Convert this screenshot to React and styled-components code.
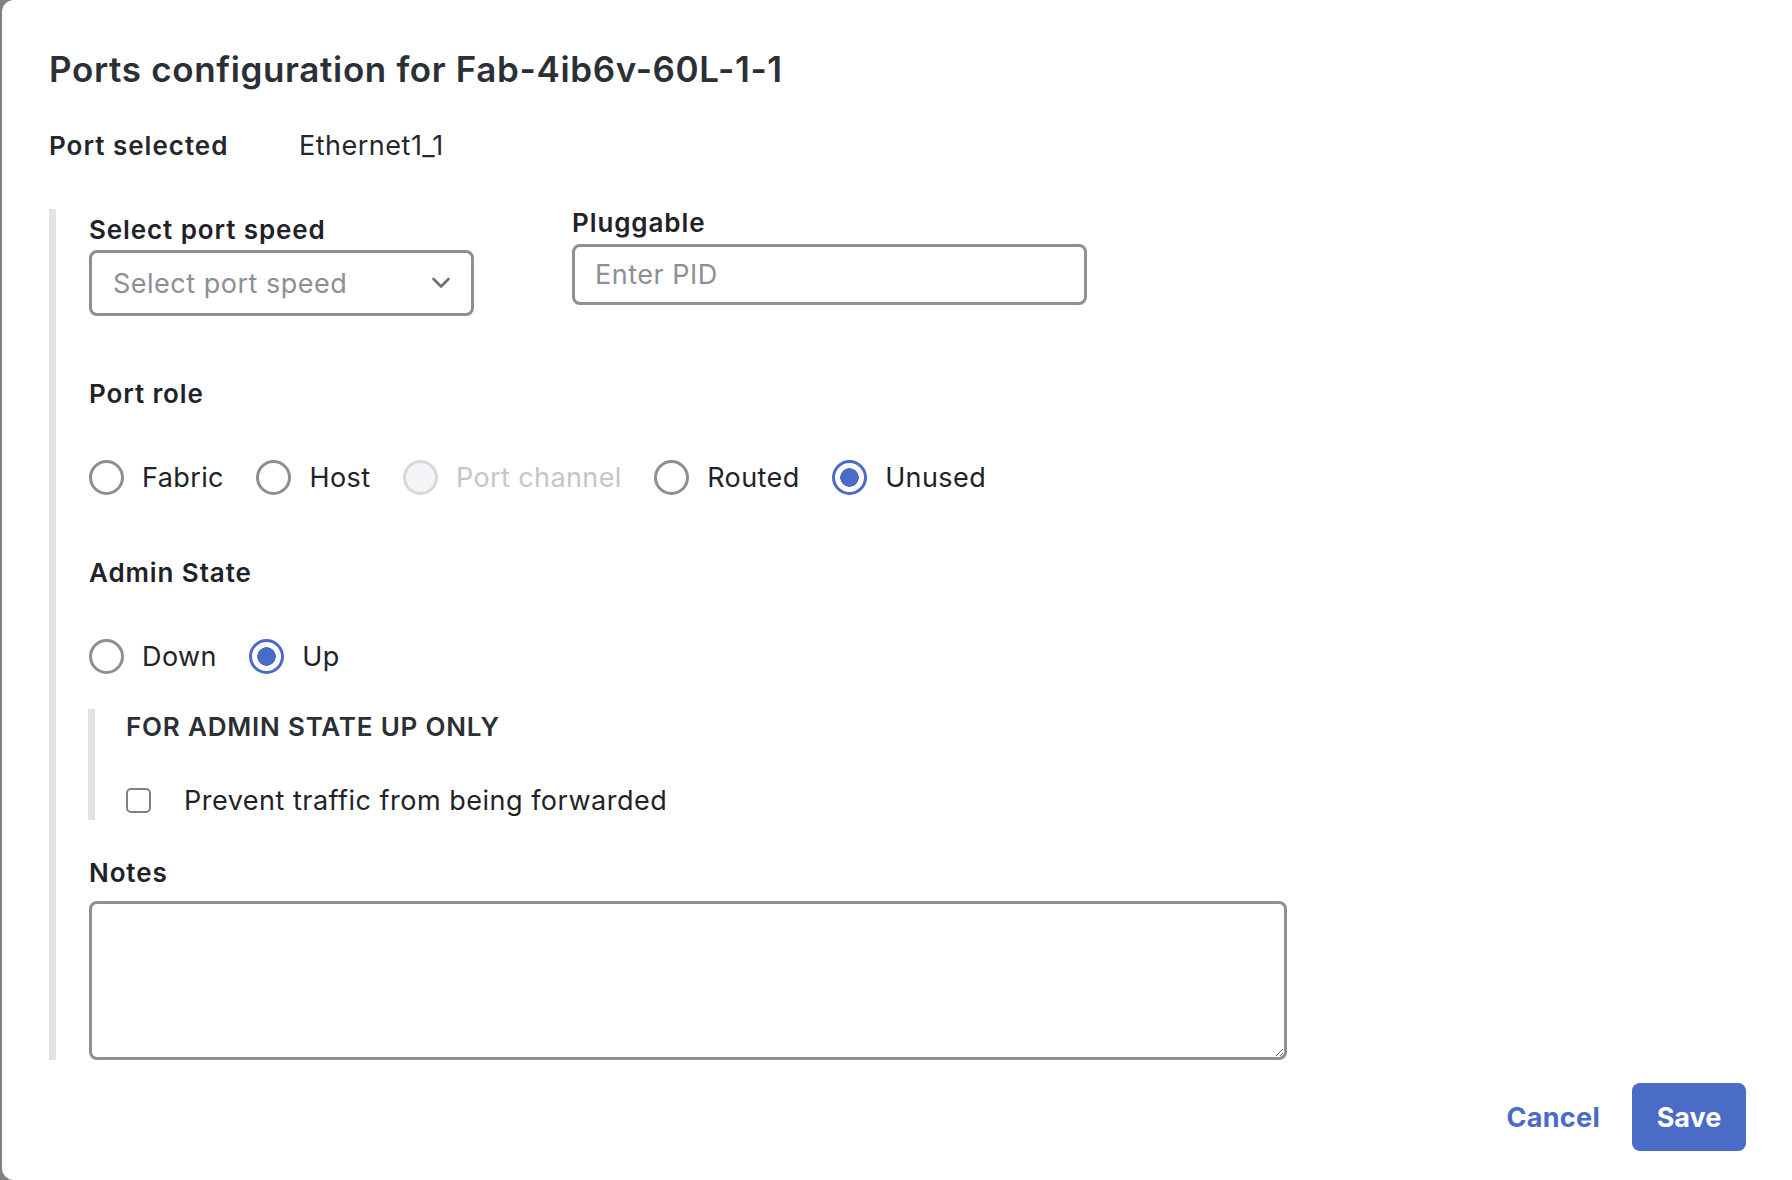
import styled, { createGlobalStyle } from "styled-components";

const GlobalStyle = createGlobalStyle`
  html, body {
    margin: 0;
    padding: 0;
  }
  body {
    background: #7f8185;
    font-family: Inter, "Noto Sans", sans-serif;
    color: #1f2329;
  }
`;

const roles = [
  { label: "Fabric" },
  { label: "Host" },
  { label: "Port channel", disabled: true },
  { label: "Routed" },
  { label: "Unused", checked: true },
];

const states = [{ label: "Down" }, { label: "Up", checked: true }];

function RadioGroup({ items }) {
  return (
    <RadioRow>
      {items.map((item) => (
        <RadioItem key={item.label} $disabled={item.disabled}>
          <RadioCircle $checked={item.checked} $disabled={item.disabled} />
          {item.label}
        </RadioItem>
      ))}
    </RadioRow>
  );
}

function Chevron() {
  return (
    <svg width="20" height="12" viewBox="0 0 20 12" fill="none">
      <polyline
        points="2.5,2 10,9.5 17.5,2"
        stroke="#6d7178"
        strokeWidth="2.6"
        strokeLinecap="round"
        strokeLinejoin="round"
      />
    </svg>
  );
}

export default function App() {
  return (
    <Page>
      <GlobalStyle />
      <Dialog>
        <Title>Ports configuration for Fab-4ib6v-60L-1-1</Title>
        <SelectedRow>
          <SelectedKey>Port selected</SelectedKey>
          <span>Ethernet1_1</span>
        </SelectedRow>

        <Section>
          <FieldRow>
            <Field $offset={7}>
              <Label>Select port speed</Label>
              <SelectBox>
                Select port speed
                <Chevron />
              </SelectBox>
            </Field>
            <Field>
              <Label>Pluggable</Label>
              <PidInput placeholder="Enter PID" />
            </Field>
          </FieldRow>

          <GroupLabel>Port role</GroupLabel>
          <RadioGroup items={roles} />

          <GroupLabel>Admin State</GroupLabel>
          <RadioGroup items={states} />

          <SubSection>
            <SubHeading>For admin state up only</SubHeading>
            <CheckRow>
              <CheckBox />
              Prevent traffic from being forwarded
            </CheckRow>
          </SubSection>

          <NotesLabel>Notes</NotesLabel>
          <Notes />
        </Section>

        <Footer>
          <CancelButton>Cancel</CancelButton>
          <SaveButton>Save</SaveButton>
        </Footer>
      </Dialog>
    </Page>
  );
}

const Page = styled.div`
  display: flex;
  height: 1180px;
  padding-left: 2px;
  overflow: hidden;
`;

const Dialog = styled.div`
  flex: 1;
  display: flex;
  flex-direction: column;
  background: #ffffff;
  border-radius: 12px 0 0 12px;
  padding: 49px 46px 0 47px;
`;

const Title = styled.h1`
  margin: 0;
  font-size: 35px;
  font-weight: 600;
  line-height: 40px;
  color: #2b2f36;
  letter-spacing: 0.65px;
`;

const SelectedRow = styled.div`
  display: flex;
  margin-top: 41px;
  font-size: 27px;
  line-height: 32px;
  letter-spacing: 0.5px;
  color: #23272e;
`;

const SelectedKey = styled.span`
  width: 250px;
  font-size: 26px;
  font-weight: 600;
  letter-spacing: 1px;
`;

const Section = styled.div`
  display: flex;
  flex-direction: column;
  align-items: flex-start;
  margin-top: 47px;
  padding-left: 33px;
  border-left: 7px solid #e1e3e7;
`;

const FieldRow = styled.div`
  display: flex;
  align-items: flex-start;
  gap: 98px;
`;

const Field = styled.div`
  display: flex;
  flex-direction: column;
  margin-top: ${(p) => p.$offset || 0}px;
`;

const Label = styled.div`
  font-size: 26px;
  font-weight: 600;
  line-height: 28px;
  letter-spacing: 0.9px;
  margin-bottom: 7px;
  color: #1f2329;
`;

const SelectBox = styled.div`
  box-sizing: border-box;
  width: 385px;
  height: 66px;
  margin-top: -1px;
  display: flex;
  align-items: center;
  justify-content: space-between;
  padding: 0 20px 0 21px;
  border: 3px solid #8b8f96;
  border-radius: 8px;
  font-size: 27px;
  letter-spacing: 0.5px;
  color: #8b8f96;
`;

const PidInput = styled.input`
  box-sizing: border-box;
  width: 515px;
  height: 61px;
  padding: 0 20px;
  border: 3px solid #8b8f96;
  border-radius: 8px;
  font-family: inherit;
  font-size: 27px;
  letter-spacing: 0.5px;
  outline: none;

  &::placeholder {
    color: #8b8f96;
  }
`;

const GroupLabel = styled(Label)`
  margin: 64px 0 0;
`;

const RadioRow = styled.div`
  display: flex;
  gap: 32.5px;
  margin-top: 52px;
`;

const RadioItem = styled.label`
  display: flex;
  align-items: center;
  gap: 18px;
  height: 35px;
  font-size: 27px;
  letter-spacing: 0.4px;
  color: ${(p) => (p.$disabled ? "#c3c6cb" : "#1f2329")};
`;

const RadioCircle = styled.span`
  box-sizing: border-box;
  width: 35px;
  height: 35px;
  border-radius: 50%;
  border: 3px solid
    ${(p) => (p.$checked ? "#4a6bc6" : p.$disabled ? "#d6d8dc" : "#8b8f96")};
  background: ${(p) =>
    p.$checked
      ? "radial-gradient(circle, #4a6bc6 0 9px, #ffffff 9.5px)"
      : p.$disabled
      ? "#f4f5f6"
      : "#ffffff"};
`;

const SubSection = styled.div`
  display: flex;
  flex-direction: column;
  margin: 35px 0 0 -1px;
  padding: 4px 0 2px 31px;
  border-left: 7px solid #e1e3e7;
`;

const SubHeading = styled.div`
  font-size: 26px;
  font-weight: 600;
  line-height: 28px;
  letter-spacing: 0.8px;
  text-transform: uppercase;
  color: #2b2f36;
`;

const CheckRow = styled.label`
  display: flex;
  align-items: center;
  gap: 33px;
  height: 35px;
  margin-top: 42px;
  font-size: 27px;
  letter-spacing: 0.5px;
  color: #1f2329;
`;

const CheckBox = styled.span`
  box-sizing: border-box;
  width: 25px;
  height: 25px;
  border: 2px solid #7d8189;
  border-radius: 5px;
`;

const NotesLabel = styled(Label)`
  margin: 39px 0 14px;
`;

const Notes = styled.textarea`
  box-sizing: border-box;
  width: 1198px;
  height: 159px;
  border: 3px solid #8b8f96;
  border-radius: 8px;
  font-family: inherit;
  font-size: 26px;
  outline: none;
  margin: 0;
  display: block;
`;

const Footer = styled.div`
  display: flex;
  justify-content: flex-end;
  align-items: center;
  gap: 32px;
  margin-top: 23px;
`;

const CancelButton = styled.button`
  border: none;
  background: none;
  padding: 0;
  font-family: inherit;
  font-size: 27px;
  font-weight: 700;
  letter-spacing: 0.3px;
  color: #4a6bc6;
`;

const SaveButton = styled.button`
  width: 114px;
  height: 68px;
  border: none;
  border-radius: 8px;
  background: #4a6bc6;
  font-family: inherit;
  font-size: 27px;
  font-weight: 700;
  color: #ffffff;
`;
